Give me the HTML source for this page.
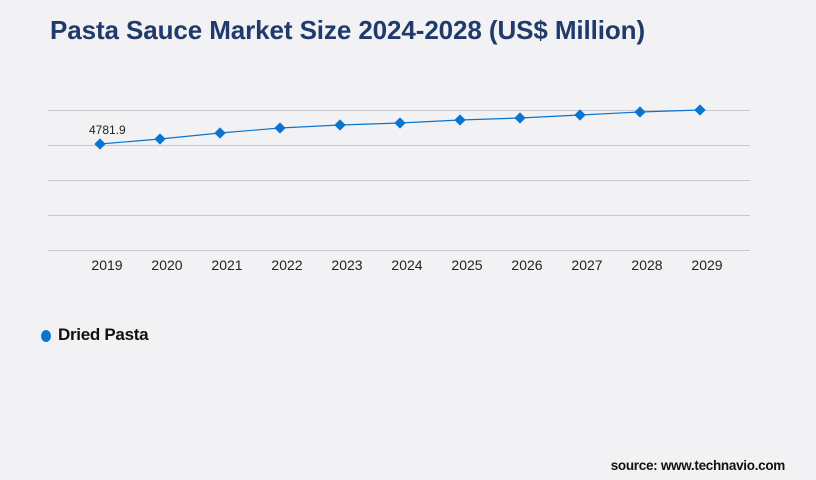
<!DOCTYPE html>
<html><head><style>
body{margin:0;width:816px;height:480px;background:#f2f2f4;font-family:"Liberation Sans",sans-serif;overflow:hidden;position:relative}
.t{position:absolute;left:50px;top:15px;font-size:26px;font-weight:bold;color:#1f3a6b;letter-spacing:-0.1px}
</style></head><body>
<div class="t">Pasta Sauce Market Size 2024-2028 (US$ Million)</div>
<svg width="816" height="480" style="position:absolute;left:0;top:0">
<g stroke="#c8c8cc" stroke-width="1">
<line x1="48" y1="110.5" x2="750" y2="110.5"/><line x1="48" y1="145.5" x2="750" y2="145.5"/><line x1="48" y1="180.5" x2="750" y2="180.5"/><line x1="48" y1="215.5" x2="750" y2="215.5"/><line x1="48" y1="250.5" x2="750" y2="250.5"/>
</g>
<polyline fill="none" stroke="#0a74d0" stroke-width="1.2" points="100,144 160,139 220,133 280,128 340,125 400,123 460,120 520,118 580,115 640,112 700,110"/>
<g fill="#0a74d0">
<rect x="96" y="140" width="8" height="8" transform="rotate(45 100 144)"/>
<rect x="156" y="135" width="8" height="8" transform="rotate(45 160 139)"/>
<rect x="216" y="129" width="8" height="8" transform="rotate(45 220 133)"/>
<rect x="276" y="124" width="8" height="8" transform="rotate(45 280 128)"/>
<rect x="336" y="121" width="8" height="8" transform="rotate(45 340 125)"/>
<rect x="396" y="119" width="8" height="8" transform="rotate(45 400 123)"/>
<rect x="456" y="116" width="8" height="8" transform="rotate(45 460 120)"/>
<rect x="516" y="114" width="8" height="8" transform="rotate(45 520 118)"/>
<rect x="576" y="111" width="8" height="8" transform="rotate(45 580 115)"/>
<rect x="636" y="108" width="8" height="8" transform="rotate(45 640 112)"/>
<rect x="696" y="106" width="8" height="8" transform="rotate(45 700 110)"/>
<ellipse cx="46" cy="336" rx="5" ry="6"/>
</g>
<text x="89" y="134" font-size="12" fill="#222">4781.9</text>
<g font-size="14" fill="#222" text-anchor="middle">
<text x="107" y="270">2019</text><text x="167" y="270">2020</text><text x="227" y="270">2021</text><text x="287" y="270">2022</text><text x="347" y="270">2023</text><text x="407" y="270">2024</text><text x="467" y="270">2025</text><text x="527" y="270">2026</text><text x="587" y="270">2027</text><text x="647" y="270">2028</text><text x="707" y="270">2029</text>
</g>
<text x="58" y="340" font-size="17" font-weight="bold" fill="#111" letter-spacing="-0.3">Dried Pasta</text>
<text x="785" y="470" font-size="13.5" font-weight="bold" fill="#111" text-anchor="end" letter-spacing="-0.3">source: www.technavio.com</text>
</svg>
</body></html>
